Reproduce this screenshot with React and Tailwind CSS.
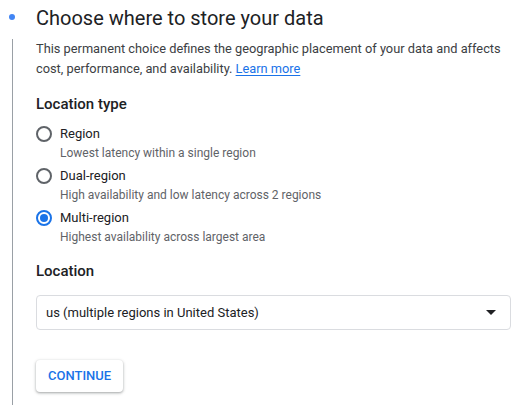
import {useState} from "react";

const options = [
  {id: 'region', label: 'Region', hint: 'Lowest latency within a single region'},
  {id: 'dual', label: 'Dual-region', hint: 'High availability and low latency across 2 regions'},
  {id: 'multi', label: 'Multi-region', hint: 'Highest availability across largest area'},
];

function Radio({checked}) {
  return (
    <span
      className={`flex items-center justify-center w-4 h-4 rounded-full border-2 shrink-0 ${checked ? 'border-[#1a73e8]' : 'border-[#5f6368]'}`}>
      {checked && <span className="w-2 h-2 rounded-full bg-[#1a73e8]"/>}
    </span>
  );
}

export default function App() {
  const [type, setType] = useState('multi');

  return (
    <div className="flex h-[405px] w-[522px] bg-white text-[#202124] overflow-hidden"
         style={{fontFamily: 'Roboto, "Noto Sans", sans-serif'}}>
      {/* step rail */}
      <div className="w-6 flex flex-col items-center shrink-0">
        <div className="mt-[14px] w-[6px] h-[6px] rounded-full bg-[#4285f4]"/>
        <div className="mt-[19px] w-px flex-1 bg-[#9aa0a6]"/>
      </div>

      <div className="ml-3 pr-[11px] flex-1">
        <h2 className="pt-1 text-[20px] leading-[28px] font-normal">Choose where to store your data</h2>
        <p className="mt-[6.5px] text-[12.8px] leading-5 text-[#3c4043]">
          This permanent choice defines the geographic placement of your data and affects cost, performance, and
          availability. <a className="text-[#1a73e8] underline underline-offset-2" href="#">Learn more</a>
        </p>

        <div className="mt-[13.5px] text-[15px] leading-6 font-medium">Location type</div>
        <div className="mt-2 flex flex-col gap-1">
          {options.map(o => (
            <label key={o.id} className="flex gap-2 cursor-pointer" onClick={() => setType(o.id)}>
              <div className="h-5 flex items-center">
                <Radio checked={type === o.id}/>
              </div>
              <div>
                <div className="text-[13px] leading-5">{o.label}</div>
                <div className="text-[12px] leading-[18px] text-[#5f6368]">{o.hint}</div>
              </div>
            </label>
          ))}
        </div>

        <div className="mt-[13px] text-[15px] leading-6 font-medium">Location</div>
        <div
          className="mt-3 h-[35px] flex items-center justify-between border border-[#dadce0] rounded pl-[9px] pr-[14px] text-[13px]">
          <span>us (multiple regions in United States)</span>
          <svg width="10" height="5" viewBox="0 0 10 5"><path d="M0 0h10L5 5z" fill="#202124"/></svg>
        </div>

        <button
          className="mt-[30px] h-8 px-[12px] rounded bg-white text-[13px] font-medium text-[#1a73e8] shadow-[0_1px_2px_rgba(60,64,67,0.3),0_1px_3px_1px_rgba(60,64,67,0.15)]">
          CONTINUE
        </button>
      </div>
    </div>
  );
}
